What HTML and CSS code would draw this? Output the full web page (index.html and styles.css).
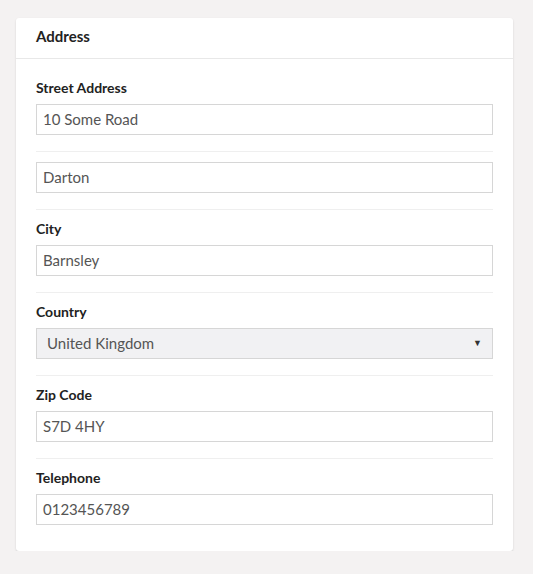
FILE: index.html
```html
<!DOCTYPE html>
<html>
<head>
<meta charset="utf-8">
<link rel="stylesheet" href="styles.css">
</head>
<body>
<div class="card">
  <div class="card-header">Address</div>
  <div class="card-body">
    <div class="group">
      <div class="label">Street Address</div>
      <div class="input">10 Some Road</div>
    </div>
    <div class="group">
      <div class="input">Darton</div>
    </div>
    <div class="group">
      <div class="label">City</div>
      <div class="input">Barnsley</div>
    </div>
    <div class="group">
      <div class="label">Country</div>
      <div class="select"><span>United Kingdom</span><span class="arrow">▼</span></div>
    </div>
    <div class="group">
      <div class="label">Zip Code</div>
      <div class="input">S7D 4HY</div>
    </div>
    <div class="group">
      <div class="label">Telephone</div>
      <div class="input">0123456789</div>
    </div>
  </div>
</div>
</body>
</html>
```
FILE: styles.css
```css
html, body {
  margin: 0;
  padding: 0;
  background: #f4f2f2;
  font-family: Lato, "Open Sans", sans-serif;
}
body {
  padding: 18px 20px 0 16px;
}
.card {
  background: #fff;
  border-radius: 3px;
  box-shadow: 0 1px 2px rgba(0,0,0,0.15);
}
.card-header {
  height: 41px;
  box-sizing: border-box;
  padding: 0 20px 4px;
  display: flex;
  align-items: center;
  font-size: 15px;
  font-weight: 700;
  color: #222;
  border-bottom: 1px solid #e8e8e8;
}
.card-body {
  padding: 10px 20px 10px;
}
.group {
  padding: 10px 0 16px;
}
.group + .group {
  border-top: 1px solid #efefef;
}
.label {
  font-size: 14px;
  font-weight: 700;
  color: #222;
  line-height: 18px;
  margin-bottom: 7px;
}
.input, .select {
  height: 31px;
  box-sizing: border-box;
  border: 1px solid #d6d6d6;
  font-size: 15px;
  color: #555;
  display: flex;
  align-items: center;
  padding: 0 6px 2px;
}
.select {
  background: #f1f1f3;
  padding: 0 10px 2px;
  justify-content: space-between;
}
.arrow {
  font-size: 9px;
  color: #333;
}
```
